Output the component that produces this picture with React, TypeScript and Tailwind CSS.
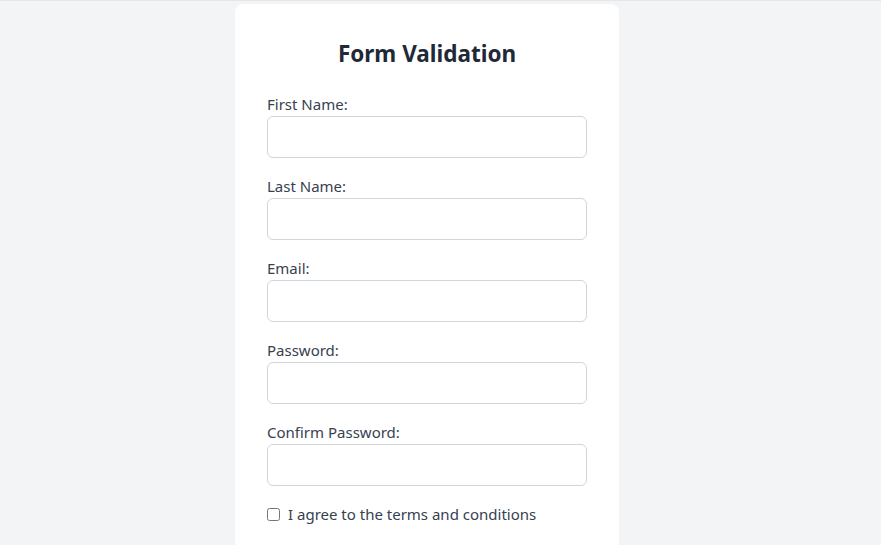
import { useState } from "react";

const fields = [
  { id: "firstName", label: "First Name:", type: "text" },
  { id: "lastName", label: "Last Name:", type: "text" },
  { id: "email", label: "Email:", type: "email" },
  { id: "password", label: "Password:", type: "password" },
  { id: "confirmPassword", label: "Confirm Password:", type: "password" },
];

export default function App() {
  const [values, setValues] = useState<Record<string, string>>({});
  const [agree, setAgree] = useState(false);

  return (
    <div className="min-h-screen bg-[#f3f4f6] border-t border-[#e5e7eb] pt-[3px] font-['Noto_Sans',sans-serif]">
      <div className="w-[384px] ml-[235px] bg-white rounded-lg px-8 pt-[33px] pb-6">
        <h1 className="text-[22.5px] leading-[34px] font-bold text-[#1f2937] text-center mb-[21px]">
          Form Validation
        </h1>
        <form onSubmit={(e) => e.preventDefault()}>
          {fields.map((f) => (
            <div key={f.id} className="mb-4">
              <label htmlFor={f.id} className="block text-[15px] leading-6 text-[#374151]">
                {f.label}
              </label>
              <input
                id={f.id}
                type={f.type}
                value={values[f.id] ?? ""}
                onChange={(e) => setValues({ ...values, [f.id]: e.target.value })}
                className="block w-full h-[42px] px-3 border border-[#d1d5db] rounded-md outline-none focus:border-blue-500"
              />
            </div>
          ))}
          <label className="flex items-center text-[15px] leading-6 text-[#374151]">
            <input
              type="checkbox"
              checked={agree}
              onChange={(e) => setAgree(e.target.checked)}
              className="w-[13px] h-[13px] mr-2"
            />
            I agree to the terms and conditions
          </label>
        </form>
      </div>
    </div>
  );
}
